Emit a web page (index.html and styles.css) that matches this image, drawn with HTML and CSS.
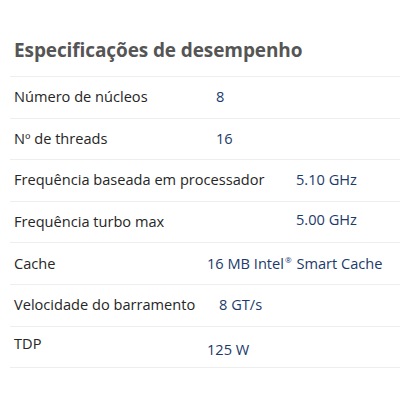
FILE: index.html
```
<!DOCTYPE html>
<html lang="pt">
<head>
<meta charset="utf-8">
<link rel="stylesheet" href="styles.css">
</head>
<body>
<section class="specs">
  <h2 class="title">Especificações de desempenho</h2>
  <ul class="list">
    <li class="row"><span class="label w-216">Número de núcleos</span><span class="value">8</span></li>
    <li class="row"><span class="label w-216">Nº de threads</span><span class="value">16</span></li>
    <li class="row"><span class="label w-296">Frequência baseada em processador</span><span class="value">5.10 GHz</span></li>
    <li class="row"><span class="label w-296">Frequência turbo max</span><span class="value up">5.00 GHz</span></li>
    <li class="row"><span class="label w-207">Cache</span><span class="value">16 MB Intel<sup class="reg">®</sup> Smart Cache</span></li>
    <li class="row"><span class="label w-219">Velocidade do barramento</span><span class="value">8 GT/s</span></li>
    <li class="row"><span class="label w-207 up">TDP</span><span class="value down">125 W</span></li>
  </ul>
</section>
</body>
</html>
```
FILE: styles.css
```
html, body {
  margin: 0;
  padding: 0;
  background: #ffffff;
}
body {
  font-family: "Open Sans", "DejaVu Sans", sans-serif;
  width: 400px;
  overflow: hidden;
}
.specs {
  padding: 31px 0 0 10px;
}
.title {
  margin: 0;
  padding: 0 0 0 4px;
  height: 46px;
  box-sizing: border-box;
  font-size: 19px;
  font-weight: 700;
  color: #555555;
  line-height: 38px;
  border-bottom: 1px solid #eeeeee;
  letter-spacing: -0.1px;
}
.list {
  list-style: none;
  margin: 0;
  padding: 0;
}
.row {
  display: flex;
  align-items: center;
  height: 41.6px;
  box-sizing: border-box;
  border-bottom: 1px solid #eeeeee;
  padding: 0 0 2px 4px;
  font-size: 14.6px;
  line-height: 20px;
}
.label {
  color: #262626;
  flex: 0 0 auto;
  white-space: nowrap;
}
.w-216 { width: 202px; }
.w-296 { width: 282px; }
.w-207 { width: 193px; }
.w-219 { width: 205px; }
.value {
  color: #1c3a6b;
  white-space: nowrap;
}
.reg {
  font-size: 8px;
  vertical-align: 6px;
  line-height: 0;
  margin: 0 1px 0 1px;
}
.up { margin-top: -5px; }
.value.up { margin-top: -4px; }
.down { margin-top: 6px; }
```
